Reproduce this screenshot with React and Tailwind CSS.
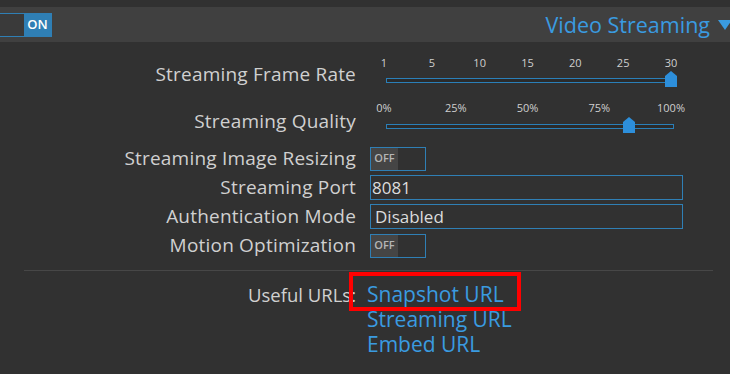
import React from 'react';

const frameTicks = [1, 5, 10, 15, 20, 25, 30];
const qualityTicks = ['0%', '25%', '50%', '75%', '100%'];

const SPAN = 287;

const Thumb = ({ value }) => (
  <svg
    className="absolute top-[20px]"
    style={{ left: 14 + value * SPAN - 6 }}
    width="12"
    height="16"
    viewBox="0 0 12 16"
  >
    <path d="M0 16 V5 L6 0 L12 5 V16 Z" fill="#2d8fdb" />
  </svg>
);

const Slider = ({ ticks, value, top }) => (
  <div className="relative w-[310px] h-[46px]">
    {ticks.map((t, i) => (
      <span
        key={i}
        className={`absolute ${top} text-[11px] leading-none text-[#cfcfcf] -translate-x-1/2`}
        style={{ left: 14 + (i / (ticks.length - 1)) * SPAN }}
      >
        {t}
      </span>
    ))}
    <div className="absolute left-[16px] top-[27px] w-[288px] h-[5px] border border-[#2a7fb8] bg-[#2b2b2b]" />
    <Thumb value={value} />
  </div>
);

const Toggle = ({ on }) =>
  on ? (
    <div className="flex w-[53px] h-[24px] border border-[#2f7fb5] -ml-[1px]">
      <div className="flex-1 bg-[#3a3a3a]" />
      <div className="w-[27px] bg-[#2f7fb5] text-white text-[13px] font-semibold flex items-center justify-center">ON</div>
    </div>
  ) : (
    <div className="flex w-[56px] h-[24px] border border-[#2f7fb5]">
      <div className="w-[27px] bg-[#454545] text-[#b5b5b5] text-[11px] font-semibold flex items-center justify-center">OFF</div>
      <div className="flex-1" />
    </div>
  );

const Row = ({ label, children }) => (
  <div className="flex items-center h-[29px]">
    <div className="w-[356px] text-right text-[#d0d0d0] text-[19px] tracking-[0.2px] leading-none">{label}</div>
    <div className="pl-[14px] flex items-center">{children}</div>
  </div>
);

export default function App() {
  return (
    <div
      className="w-[730px] h-[374px] bg-[#313131] overflow-hidden pt-[7px]"
      style={{ fontFamily: '"Open Sans", "DejaVu Sans", sans-serif' }}
    >
      <div className="h-[35px] bg-[#404040] flex items-center justify-between">
        <Toggle on />
        <div className="flex items-center text-[#3a9be0] text-[21.5px] leading-none">
          <span>Video Streaming</span>
          <svg className="ml-[8px] -mr-[2px]" width="14" height="10" viewBox="0 0 14 10">
            <path d="M0 0 H14 L7 10 Z" fill="#3a9be0" />
          </svg>
        </div>
      </div>

      <div className="mt-[9px]">
        <div className="flex h-[46px]">
          <div className="w-[356px] text-right text-[#d0d0d0] text-[19px] tracking-[0.2px] leading-none pt-[14px]">Streaming Frame Rate</div>
          <div className="pl-[14px]">
            <Slider ticks={frameTicks} value={1} top="top-[6px]" />
          </div>
        </div>
        <div className="flex h-[46px]">
          <div className="w-[356px] text-right text-[#d0d0d0] text-[19px] tracking-[0.2px] leading-none pt-[15px]">Streaming Quality</div>
          <div className="pl-[14px]">
            <Slider ticks={qualityTicks} value={0.852} top="top-[5px]" />
          </div>
        </div>
        <div className="mt-[1px]">
          <Row label="Streaming Image Resizing">
            <Toggle />
          </Row>
          <Row label="Streaming Port">
            <div className="w-[313px] h-[25px] border border-[#2f7fb5] text-[#dcdcdc] text-[17px] flex items-center pl-[1px]">8081</div>
          </Row>
          <Row label="Authentication Mode">
            <div className="w-[313px] h-[25px] border border-[#2f7fb5] text-[#dcdcdc] text-[17px] flex items-center pl-[4px]">Disabled</div>
          </Row>
          <Row label="Motion Optimization">
            <Toggle />
          </Row>
        </div>
      </div>

      <div className="ml-[24px] w-[689px] mt-[10px] border-t border-[#474747]" />

      <div className="flex mt-[11px]">
        <div className="w-[356px] text-right text-[#d0d0d0] text-[18.5px] leading-[25px]">Useful URLs:</div>
        <div className="pl-[11px] flex flex-col text-[#3a9be0] text-[21px] leading-[25px]">
          <span className="relative h-[25px]">
            Snapshot URL
            <span className="absolute left-[-18px] top-[-10px] w-[172px] h-[39px] border-[4px] border-[#ff0000]" />
          </span>
          <span className="h-[25px]">Streaming URL</span>
          <span className="h-[25px]">Embed URL</span>
        </div>
      </div>
    </div>
  );
}
